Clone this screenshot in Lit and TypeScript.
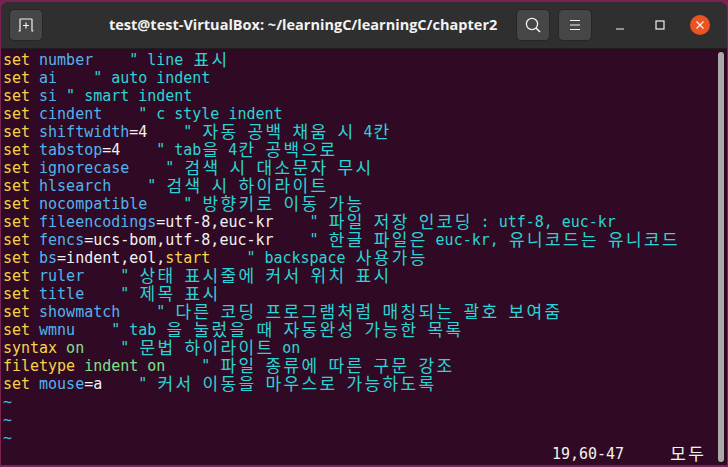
import { LitElement, html, css } from "lit";
import { customElement } from "lit/decorators.js";

type Seg = [string, string];
const Y = "y", B = "b", C = "c", G = "g", W = "w";
const LINES: Seg[][] = [
  [[Y,"set"],[B," number"],[C,"    \" line 표시"]],
  [[Y,"set"],[B," ai"],[C,"    \" auto indent"]],
  [[Y,"set"],[B," si"],[C," \" smart indent"]],
  [[Y,"set"],[B," cindent"],[C,"    \" c style indent"]],
  [[Y,"set"],[B," shiftwidth"],[W,"=4"],[C,"    \" 자동 공백 채움 시 4칸"]],
  [[Y,"set"],[B," tabstop"],[W,"=4"],[C,"    \" tab을 4칸 공백으로"]],
  [[Y,"set"],[B," ignorecase"],[C,"    \" 검색 시 대소문자 무시"]],
  [[Y,"set"],[B," hlsearch"],[C,"    \" 검색 시 하이라이트"]],
  [[Y,"set"],[B," nocompatible"],[C,"    \" 방향키로 이동 가능"]],
  [[Y,"set"],[B," fileencodings"],[W,"=utf-8,euc-kr"],[C,"    \" 파일 저장 인코딩 : utf-8, euc-kr"]],
  [[Y,"set"],[B," fencs"],[W,"=ucs-bom,utf-8,euc-kr"],[C,"    \" 한글 파일은 euc-kr, 유니코드는 유니코드"]],
  [[Y,"set"],[B," bs"],[W,"=indent,eol,"],[Y,"start"],[C,"    \" backspace 사용가능"]],
  [[Y,"set"],[B," ruler"],[C,"    \" 상태 표시줄에 커서 위치 표시"]],
  [[Y,"set"],[B," title"],[C,"    \" 제목 표시"]],
  [[Y,"set"],[B," showmatch"],[C,"    \" 다른 코딩 프로그램처럼 매칭되는 괄호 보여줌"]],
  [[Y,"set"],[B," wmnu"],[C,"    \" tab 을 눌렀을 때 자동완성 가능한 목록"]],
  [[Y,"syntax"],[G," on"],[C,"    \" 문법 하이라이트 on"]],
  [[Y,"filetype"],[G," indent on"],[C,"    \" 파일 종류에 따른 구문 강조"]],
  [[Y,"set"],[B," mouse"],[W,"=a"],[C,"    \" 커서 이동을 마우스로 가능하도록"]],
  [[B,"~"]],
  [[B,"~"]],
  [[B,"~"]],
];

const cells = (t: string) =>
  [...t].map((ch) =>
    /[가-힣]/.test(ch) ? html`<span class="wide">${ch}</span>` : ch
  );

@customElement("app-root")
export class AppRoot extends LitElement {
  static styles = css`
    :host { display: block; width: 728px; height: 467px; background: #7a2350; overflow: hidden; }
    .win { margin: 2px 1px 2px; height: 463px; border-radius: 8px 8px 0 0; overflow: hidden; background: #300a24; display: flex; flex-direction: column; }
    .bar { height: 47px; flex: none; background: #2f2f2f; border-bottom: 1px solid #1f1f1f; box-sizing: border-box; padding: 7px 7px 0 8px; display: flex; align-items: flex-start; color: #f2f2f2; }
    .btn { width: 34px; height: 32px; flex: none; border-radius: 5px; background: #464646; border: 1px solid #262626; box-sizing: border-box; display: flex; align-items: center; justify-content: center; }
    .title { flex: 1; padding-left: 66px; font: 700 14.5px/32px "Open Sans", "Noto Sans", sans-serif; white-space: nowrap; }
    .right { display: flex; align-items: center; }
    .gap { width: 8px; }
    .ctl { width: 40px; height: 32px; display: flex; align-items: center; justify-content: center; }
    .close { width: 20px; height: 20px; border-radius: 50%; background: #e95420; display: flex; align-items: center; justify-content: center; }
    svg { display: block; fill: none; stroke: #f2f2f2; }
    .term { flex: 1; position: relative; padding: 2px 0 0 2px; font: 15px/18px "DejaVu Sans Mono", monospace; letter-spacing: -0.03px; color: #2bd5d5; }
    .line { height: 18px; white-space: pre; }
    .wide { display: inline-block; width: 18px; text-align: center; font-family: "Noto Sans CJK KR", sans-serif; font-size: 17px; letter-spacing: 0; line-height: 16px; height: 18px; vertical-align: top; }
    .y { color: #f5d547; } .b { color: #4fb4ee; } .c { color: #2bd5d5; } .g { color: #7fe08a; } .w { color: #f2f2f2; }
    .status { position: absolute; left: 551px; top: 396px; color: #f2f2f2; white-space: pre; }
    .mode { position: absolute; left: 668px; top: 396px; color: #f2f2f2; }
    .scroll { position: absolute; right: 3px; top: 3px; bottom: 3px; width: 6px; border-radius: 3px; background: #aaaaaa; }
  `;

  render() {
    return html`<div class="win">
      <div class="bar">
        <div class="btn"><svg width="16" height="14" viewBox="0 0 16 14"><path d="M0.5 13H2V1.5Q2 1 2.5 1H13.5Q14 1 14 1.5V13H15.5M8 4.5V10.5M5 7.5H11" stroke-width="1.2"/></svg></div>
        <div class="title">test@test-VirtualBox: ~/learningC/learningC/chapter2</div>
        <div class="right">
          <div class="btn"><svg width="16" height="16" viewBox="0 0 16 16"><circle cx="7" cy="7" r="5.6" stroke-width="1.3"/><path d="M11 11l4 4" stroke-width="1.6"/></svg></div>
          <div class="gap"></div>
          <div class="btn"><svg width="12" height="12" viewBox="0 0 12 12"><path d="M1 1.5h10M1 6h10M1 10.5h10" stroke-width="1.2"/></svg></div>
          <div class="gap"></div>
          <div class="ctl"><svg width="10" height="10" viewBox="0 0 10 10"><path d="M1 9h8" stroke-width="1.2"/></svg></div>
          <div class="ctl"><svg width="10" height="10" viewBox="0 0 10 10"><rect x="1" y="1" width="8" height="8" stroke-width="1.2"/></svg></div>
          <div class="ctl"><div class="close"><svg width="10" height="10" viewBox="0 0 10 10"><path d="M1.5 1.5l7 7M8.5 1.5l-7 7" stroke-width="1.2"/></svg></div></div>
        </div>
      </div>
      <div class="term">
        ${LINES.map((l) => html`<div class="line">${l.map(([c, t]) => html`<span class=${c}>${cells(t)}</span>`)}</div>`)}
        <div class="status">19,60-47</div>
        <div class="mode"><span class="wide">모</span><span class="wide">두</span></div>
        <div class="scroll"></div>
      </div>
    </div>`;
  }
}
